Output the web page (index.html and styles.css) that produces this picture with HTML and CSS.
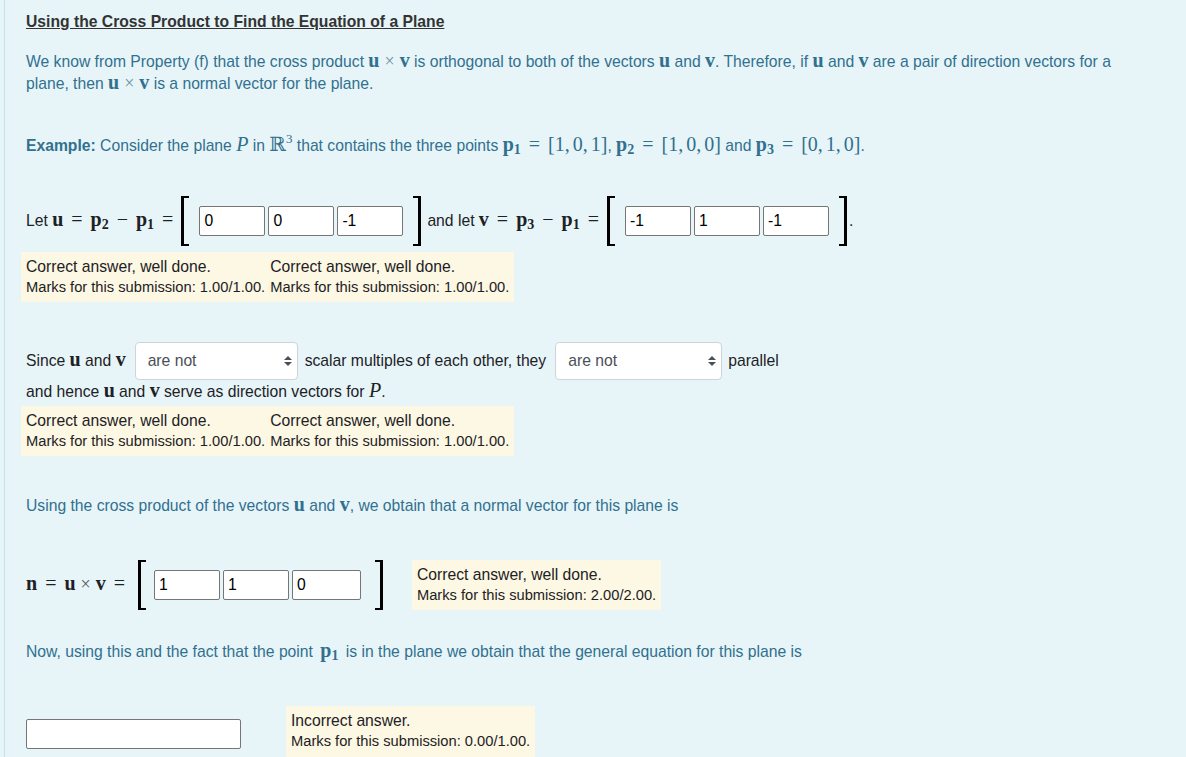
FILE: index.html
```html
<!DOCTYPE html>
<html>
<head>
<meta charset="utf-8">
<link rel="stylesheet" href="styles.css">
</head>
<body>
<div class="formulation">
  <div class="title">Using the Cross Product to Find the Equation of a Plane</div>

  <p class="info intro">We know from Property (f) that the cross product <span class="m"><b>u</b><span class="op x">×</span><b>v</b></span> is orthogonal to both of the vectors <span class="m"><b>u</b></span> and <span class="m"><b>v</b></span>. Therefore, if <span class="m"><b>u</b></span> and <span class="m"><b>v</b></span> are a pair of direction vectors for a plane, then <span class="m"><b>u</b><span class="op x">×</span><b>v</b></span> is a normal vector for the plane.</p>

  <p class="info example"><b>Example:</b> Consider the plane <span class="m cal">P</span> in <span class="m">ℝ<sup>3</sup></span> that contains the three points <span class="m"><b>p<sub>1</sub></b><span class="op">=</span>[1,<span class="th"></span>0,<span class="th"></span>1]</span>, <span class="m"><b>p<sub>2</sub></b><span class="op">=</span>[1,<span class="th"></span>0,<span class="th"></span>0]</span> and <span class="m"><b>p<sub>3</sub></b><span class="op">=</span>[0,<span class="th"></span>1,<span class="th"></span>0]</span>.</p>

  <div class="row vecrow">
    <span class="txt">Let <span class="m"><b>u</b><span class="op">=</span><b>p<sub>2</sub></b><span class="op">−</span><b>p<sub>1</sub></b><span class="op">=</span></span></span>
    <span class="bracket left"></span>
    <span class="cells">
      <span class="cell">0</span><span class="cell">0</span><span class="cell">-1</span>
    </span>
    <span class="bracket right"></span>
    <span class="txt gapl">and let <span class="m"><b>v</b><span class="op">=</span><b>p<sub>3</sub></b><span class="op">−</span><b>p<sub>1</sub></b><span class="op">=</span></span></span>
    <span class="bracket left"></span>
    <span class="cells">
      <span class="cell">-1</span><span class="cell">1</span><span class="cell">-1</span>
    </span>
    <span class="bracket right"></span>
    <span class="txt dot">.</span>
  </div>

  <div class="outcome pair">
    <div class="fb"><div>Correct answer, well done.</div><div class="grade">Marks for this submission: 1.00/1.00.</div></div>
    <div class="fb"><div>Correct answer, well done.</div><div class="grade">Marks for this submission: 1.00/1.00.</div></div>
  </div>

  <div class="row since">
    <span class="txt">Since <span class="m"><b>u</b></span> and <span class="m"><b>v</b></span></span>
    <span class="select s1"><span>are not</span><svg width="8" height="10" viewBox="0 0 8 10"><path d="M4 0L8 4H0Z M0 6H8L4 10Z" fill="#495057"/></svg></span>
    <span class="txt">scalar multiples of each other, they</span>
    <span class="select s2"><span>are not</span><svg width="8" height="10" viewBox="0 0 8 10"><path d="M4 0L8 4H0Z M0 6H8L4 10Z" fill="#495057"/></svg></span>
    <span class="txt">parallel</span>
  </div>
  <div class="hence">and hence <span class="m"><b>u</b></span> and <span class="m"><b>v</b></span> serve as direction vectors for <span class="m cal">P</span>.</div>

  <div class="outcome pair o2">
    <div class="fb"><div>Correct answer, well done.</div><div class="grade">Marks for this submission: 1.00/1.00.</div></div>
    <div class="fb"><div>Correct answer, well done.</div><div class="grade">Marks for this submission: 1.00/1.00.</div></div>
  </div>

  <p class="info using">Using the cross product of the vectors <span class="m"><b>u</b></span> and <span class="m"><b>v</b></span>, we obtain that a normal vector for this plane is</p>

  <div class="row nrow">
    <span class="txt"><span class="m"><b>n</b><span class="op">=</span><b>u</b><span class="op x">×</span><b>v</b><span class="op">=</span></span></span>
    <span class="bracket left"></span>
    <span class="cells">
      <span class="cell">1</span><span class="cell">1</span><span class="cell">0</span>
    </span>
    <span class="bracket right"></span>
    <div class="outcome single n-out"><div>Correct answer, well done.</div><div class="grade">Marks for this submission: 2.00/2.00.</div></div>
  </div>

  <p class="info now">Now, using this and the fact that the point <span class="m p1"><b>p<sub>1</sub></b></span> is in the plane we obtain that the general equation for this plane is</p>

  <div class="row last">
    <span class="answer"></span>
    <div class="outcome single last-out"><div>Incorrect answer.</div><div class="grade">Marks for this submission: 0.00/1.00.</div></div>
  </div>
</div>
</body>
</html>
```

FILE: styles.css
```css
html, body {
  margin: 0;
  padding: 0;
  background: #e7f5f8;
}
body {
  font-family: "Liberation Sans", Arial, sans-serif;
  font-size: 15.7px;
  line-height: 22px;
  color: #1d2125;
  height: 757px;
  overflow: hidden;
}
.formulation {
  margin-left: 4px;
  border-left: 1px solid #c3e4ea;
  padding: 11px 40px 0 21px;
  min-height: 757px;
  box-sizing: border-box;
}
.title {
  font-weight: bold;
  color: #333;
  text-decoration: underline;
  line-height: 22px;
}
p { margin: 0; }
.info { color: #31708f; }
.intro { margin-top: 18px; }
.example { margin-top: 40px; }
.m {
  font-family: "Liberation Serif", "DejaVu Serif", serif;
  font-size: 20px;
  line-height: 0;
}
.m b { font-weight: bold; }
.m sub {
  font-size: 14px;
  vertical-align: -3px;
  line-height: 0;
}
.m sup {
  font-size: 13px;
  vertical-align: 8px;
  line-height: 0;
}
.op { margin: 0 8px; font-weight: normal; }
.op.x { margin: 0 5px; font-size: 18px; color: #555; }
.info .op.x { color: #6a8fa0; }
.th { display: inline-block; width: 3px; }
.cal { font-style: italic; font-size: 20px; }
.p1 { margin: 0 3px; }

.row {
  display: flex;
  align-items: center;
}
.row > * { flex: none; }
.vecrow {
  margin-top: 39px;
  height: 50px;
}
.vecrow .txt, .nrow .txt { line-height: 22px; }
.bracket {
  display: block;
  width: 5px;
  height: 46px;
  border: 2px solid #000;
  border-width: 2px 0 2px 3px;
}
.bracket.left { margin-left: 0; }
.bracket.right { border-width: 2px 3px 2px 0; }
.cells {
  display: flex;
  gap: 3px;
  margin: 0 10px 0 10px;
}
.cell {
  display: block;
  flex: none;
  width: 66px;
  height: 30px;
  box-sizing: border-box;
  border: 1px solid #767676;
  border-radius: 2px;
  background: #fff;
  color: #000;
  padding: 0 4px;
  line-height: 27px;
  font-size: 15.7px;
}
.gapl { margin-left: 6px; }
.dot { margin-left: 2px; }

.outcome {
  background: #fcf8e3;
  color: #1d2125;
  padding: 4px 5px;
  line-height: 21px;
}
.pair {
  display: flex;
  width: fit-content;
  margin-left: -5px;
  margin-top: 6px;
  gap: 5px;
}
.grade { font-size: 14.7px; }

.since {
  margin-top: 40px;
  height: 38px;
}
.select {
  display: flex;
  align-items: center;
  justify-content: space-between;
  box-sizing: border-box;
  height: 38px;
  background: #fff;
  border: 1px solid #ced4da;
  border-radius: 4px;
  padding: 0 5px 0 12px;
  color: #495057;
  margin: 0 7px 0 9px;
}
.s1 { width: 163px; }
.s2 { width: 167px; margin-right: 6px; }
.hence { margin-top: 1px; }
.o2 { margin-top: 3px; }

.using { margin-top: 39px; }
.nrow {
  margin-top: 43px;
  height: 50px;
}
.nrow .bracket.left { margin-left: 5px; }
.nrow .cells { margin: 0 14px 0 8px; }
.nrow .cells .cell:last-child { width: 69px; }
.n-out { margin-left: 29px; }

.now { margin-top: 31px; }
.last {
  margin-top: 43px;
  align-items: flex-start;
}
.answer {
  display: block;
  width: 215px;
  height: 30px;
  margin-top: 13px;
  box-sizing: border-box;
  border: 1px solid #767676;
  border-radius: 2px;
  background: #fff;
}
.last-out { margin-left: 45px; padding-bottom: 10px; }
```
